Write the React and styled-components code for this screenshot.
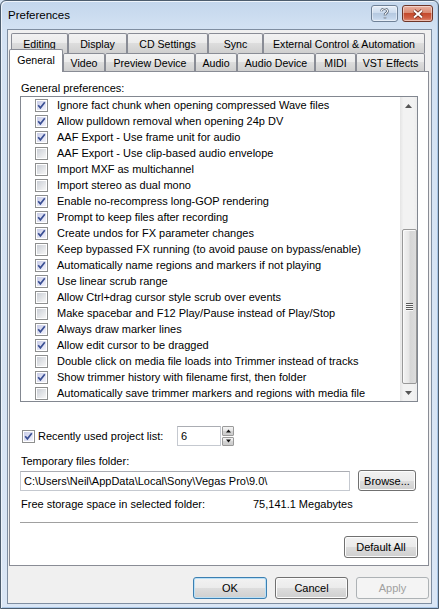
import React from "react";
import styled, { createGlobalStyle, css } from "styled-components";

const GlobalStyle = createGlobalStyle`
  html, body {
    margin: 0;
    padding: 0;
    background: #d6e4f4;
  }
  body {
    font-family: "Liberation Sans", Arial, sans-serif;
    font-size: 11px;
    color: #000;
  }
`;

const Window = styled.div`
  width: 439px;
  height: 609px;
  box-sizing: border-box;
  border: 1px solid #4d5d6e;
  border-radius: 6px 6px 0 0;
  background: linear-gradient(#c3d6ec 0, #d3e2f3 28px, #dae6f5 100%);
  box-shadow: inset 1px 1px 0 #eef4fb, inset -1px -1px 0 #a9c6e6;
  display: flex;
  flex-direction: column;
`;

const TitleBar = styled.div`
  height: 28px;
  display: flex;
  align-items: flex-start;
  justify-content: space-between;
  padding: 0 5px 0 7px;
`;

const Title = styled.div`
  font-size: 11.5px;
  line-height: 28px;
  color: #000;
`;

const CaptionButtons = styled.div`
  display: flex;
  gap: 4px;
  margin-top: 4px;
`;

const CaptionButton = styled.div`
  height: 17px;
  box-sizing: border-box;
  border-radius: 3px;
  display: flex;
  align-items: center;
  justify-content: center;
  ${(p) =>
    p.$close
      ? css`
          width: 31px;
          border: 1px solid #6e3528;
          background: linear-gradient(#eab1a1, #d98a72 45%, #c4492c 50%, #d06045 80%, #e19077);
        `
      : css`
          width: 27px;
          border: 1px solid #6f8197;
          background: linear-gradient(#e6eef8, #cddcee 45%, #b6c9e0 50%, #c2d4ea 80%, #d5e3f3);
        `}
  box-shadow: inset 0 0 0 1px rgba(255, 255, 255, 0.45);
`;

const Client = styled.div`
  flex: 1;
  margin: 0 6px 4px 6px;
  border: 1px solid #7f8ea1;
  background: #f0f0f0;
  display: flex;
  flex-direction: column;
  padding: 3px 2px 0 1px;
`;

const TabRow = styled.div`
  display: flex;
  height: ${(p) => p.$h}px;
  padding-left: ${(p) => p.$indent}px;
`;

const Tab = styled.div`
  width: ${(p) => p.$w}px;
  box-sizing: border-box;
  border: 1px solid #898c95;
  border-bottom: none;
  border-radius: 2px 2px 0 0;
  background: linear-gradient(#f2f2f2, #ebebeb 50%, #dddddd 50%, #cfcfcf);
  display: flex;
  align-items: center;
  justify-content: center;
  font-size: 10.6px;
  white-space: nowrap;
  height: 100%;
  ${(p) =>
    p.$active &&
    css`
      position: relative;
      z-index: 1;
      height: 23px;
      margin-top: -4px;
      background: #fff;
      padding-bottom: 2px;
    `}
`;

const Panel = styled.div`
  height: 495px;
  box-sizing: border-box;
  border: 1px solid #898c95;
  background: #fff;
  padding: 10px 10px 0 10px;
  display: flex;
  flex-direction: column;
`;

const Label = styled.div`
  height: ${(p) => p.$h || 13}px;
  line-height: 13px;
  margin-top: ${(p) => p.$mt || 0}px;
  padding-left: 1px;
  white-space: nowrap;
`;

const ListBox = styled.div`
  height: 306px;
  box-sizing: border-box;
  border: 1px solid #828790;
  display: flex;
`;

const ListItems = styled.div`
  flex: 1;
  display: flex;
  flex-direction: column;
  overflow: hidden;
`;

const ListRow = styled.div`
  height: 16px;
  display: flex;
  align-items: center;
  padding-left: 14px;
  white-space: nowrap;
  gap: 9px;
`;

const ScrollBar = styled.div`
  width: 17px;
  display: flex;
  flex-direction: column;
  background: linear-gradient(to right, #e4e4e4, #f2f2f2 20%, #f2f2f2 80%, #ececec);
`;

const ScrollArrow = styled.div`
  height: 17px;
  display: flex;
  align-items: center;
  justify-content: center;
`;

const ScrollTrack = styled.div`
  flex: 1;
  display: flex;
  flex-direction: column;
  justify-content: flex-end;
  padding-left: 2px;
`;

const ScrollThumb = styled.div`
  height: 155px;
  box-sizing: border-box;
  border: 1px solid #989898;
  border-radius: 2px;
  background: linear-gradient(to right, #f3f3f3, #e6e6e6 45%, #d6d6d6 55%, #dcdcdc);
  box-shadow: inset 1px 1px 0 #fafafa;
  display: flex;
  align-items: center;
  justify-content: center;
`;

const Grip = styled.div`
  width: 7px;
  display: flex;
  flex-direction: column;
  gap: 1px;
  & > span {
    height: 1px;
    background: #5a5a5a;
    box-shadow: 0 1px 0 #f8f8f8;
  }
`;

const FieldRow = styled.div`
  display: flex;
  align-items: center;
  height: ${(p) => p.$h}px;
  margin-top: ${(p) => p.$mt || 0}px;
  gap: ${(p) => p.$gap || 0}px;
`;

const CheckLabel = styled.div`
  display: flex;
  align-items: center;
  gap: 3px;
  width: 155px;
  padding-left: 2px;
`;

const Spinner = styled.div`
  display: flex;
  height: 20px;
  align-items: stretch;
`;

const TextBox = styled.div`
  width: ${(p) => p.$w}px;
  box-sizing: border-box;
  height: 20px;
  border: 1px solid #c5c9d0;
  border-top-color: #abadb3;
  background: #fff;
  padding-left: 3px;
  line-height: 18px;
  white-space: nowrap;
  overflow: hidden;
`;

const SpinButtons = styled.div`
  width: 12px;
  margin-left: 1px;
  display: flex;
  flex-direction: column;
  gap: 1px;
`;

const SpinButton = styled.div`
  flex: 1;
  box-sizing: border-box;
  border: 1px solid #9a9a9a;
  border-radius: 1px;
  background: linear-gradient(#f4f4f4, #e4e4e4 50%, #d5d5d5 50%, #cbcbcb);
  display: flex;
  align-items: center;
  justify-content: center;
`;

const Button = styled.div`
  width: ${(p) => p.$w}px;
  height: ${(p) => p.$h || 22}px;
  box-sizing: border-box;
  border: 1px solid #707070;
  border-radius: 3px;
  background: linear-gradient(#f2f2f2, #ebebeb 50%, #dddddd 50%, #cfcfcf);
  box-shadow: inset 0 0 0 1px #fcfcfc;
  display: flex;
  align-items: center;
  justify-content: center;
  white-space: nowrap;
  ${(p) =>
    p.$default &&
    css`
      border-color: #3c7fb1;
      box-shadow: inset 0 0 0 1px #b9e0f7;
    `}
  ${(p) =>
    p.$disabled &&
    css`
      border-color: #adb2b5;
      background: #f4f4f4;
      box-shadow: none;
      color: #a0a0a0;
    `}
`;

const Separator = styled.div`
  height: 1px;
  margin-top: 11px;
  background: #a0a0a0;
  border-bottom: 1px solid #fff;
`;

const RightAligned = styled.div`
  display: flex;
  justify-content: flex-end;
  gap: 8px;
  margin-top: ${(p) => p.$mt}px;
`;

const FreeSpace = styled.div`
  display: flex;
  margin-top: 7px;
  height: 13px;
  line-height: 13px;
  padding-left: 1px;
  & > span:first-child {
    width: 232px;
  }
`;

const BoxWrap = styled.span`
  width: 13px;
  height: 13px;
  flex: none;
  display: inline-flex;
`;

const CheckBox = ({ checked }) => (
  <BoxWrap>
    <svg width="13" height="13" viewBox="0 0 13 13">
      <defs>
        <linearGradient id="cbg" x1="0" y1="0" x2="1" y2="1">
          <stop offset="0" stopColor="#cbcfd6" />
          <stop offset="1" stopColor="#f6f6f6" />
        </linearGradient>
        <linearGradient id="cbc" x1="0" y1="0" x2="1" y2="1">
          <stop offset="0" stopColor="#c9cde8" />
          <stop offset="1" stopColor="#f2f2fb" />
        </linearGradient>
      </defs>
      <rect x="0.5" y="0.5" width="12" height="12" fill="#fff" stroke="#8e8f8f" />
      <rect x="2" y="2" width="9" height="9" fill={checked ? "url(#cbc)" : "url(#cbg)"} />
      {checked && (
        <path d="M3.2 6.2 L5.4 8.8 L9.8 3.2" fill="none" stroke="#3a4f94" strokeWidth="1.7" />
      )}
    </svg>
  </BoxWrap>
);

const Arrow = ({ up, color = "#555", w = 7 }) => (
  <svg width={w} height="4" viewBox="0 0 7 4">
    <path d={up ? "M0 4 L3.5 0 L7 4 Z" : "M0 0 L7 0 L3.5 4 Z"} fill={color} />
  </svg>
);

const rowOne = [
  ["Editing", 57],
  ["Display", 59],
  ["CD Settings", 81],
  ["Sync", 55],
  ["External Control & Automation", 162],
];

const rowTwo = [
  ["General", 54],
  ["Video", 42],
  ["Preview Device", 90],
  ["Audio", 42],
  ["Audio Device", 78],
  ["MIDI", 41],
  ["VST Effects", 69],
];

const prefs = [
  ["Ignore fact chunk when opening compressed Wave files", true],
  ["Allow pulldown removal when opening 24p DV", true],
  ["AAF Export - Use frame unit for audio", true],
  ["AAF Export - Use clip-based audio envelope", false],
  ["Import MXF as multichannel", false],
  ["Import stereo as dual mono", false],
  ["Enable no-recompress long-GOP rendering", true],
  ["Prompt to keep files after recording", true],
  ["Create undos for FX parameter changes", true],
  ["Keep bypassed FX running (to avoid pause on bypass/enable)", false],
  ["Automatically name regions and markers if not playing", true],
  ["Use linear scrub range", true],
  ["Allow Ctrl+drag cursor style scrub over events", false],
  ["Make spacebar and F12 Play/Pause instead of Play/Stop", false],
  ["Always draw marker lines", true],
  ["Allow edit cursor to be dragged", true],
  ["Double click on media file loads into Trimmer instead of tracks", false],
  ["Show trimmer history with filename first, then folder", true],
  ["Automatically save trimmer markers and regions with media file", false],
];

export default function App() {
  return (
    <>
      <GlobalStyle />
      <Window>
        <TitleBar>
          <Title>Preferences</Title>
          <CaptionButtons>
            <CaptionButton>
              <svg width="9" height="11" viewBox="0 0 9 11">
                <path
                  d="M1.5 3.2 C1.5 1.2 3 0.8 4.5 0.8 C6.3 0.8 7.5 1.8 7.5 3.2 C7.5 4.8 5.2 5.2 5 6.8 L5 7.6 M5 9.2 L5 10.4"
                  fill="none"
                  stroke="#3d4c60"
                  strokeWidth="2.4"
                />
                <path
                  d="M1.5 3.2 C1.5 1.2 3 0.8 4.5 0.8 C6.3 0.8 7.5 1.8 7.5 3.2 C7.5 4.8 5.2 5.2 5 6.8 L5 7.6 M5 9.2 L5 10.4"
                  fill="none"
                  stroke="#fff"
                  strokeWidth="1.1"
                />
              </svg>
            </CaptionButton>
            <CaptionButton $close>
              <svg width="12" height="10" viewBox="0 0 12 10">
                <path d="M2 1.5 L10 8.5 M10 1.5 L2 8.5" stroke="#6b2416" strokeWidth="3.6" />
                <path d="M2 1.5 L10 8.5 M10 1.5 L2 8.5" stroke="#fff" strokeWidth="2" />
              </svg>
            </CaptionButton>
          </CaptionButtons>
        </TitleBar>

        <Client>
          <TabRow $h={20} $indent={2}>
            {rowOne.map(([name, w]) => (
              <Tab key={name} $w={w}>
                {name}
              </Tab>
            ))}
          </TabRow>
          <TabRow $h={18} $indent={0}>
            {rowTwo.map(([name, w], i) => (
              <Tab key={name} $w={w} $active={i === 0}>
                {name}
              </Tab>
            ))}
          </TabRow>

          <Panel>
            <Label $h={14}>General preferences:</Label>
            <ListBox>
              <ListItems>
                {prefs.map(([text, on]) => (
                  <ListRow key={text}>
                    <CheckBox checked={on} />
                    <span>{text}</span>
                  </ListRow>
                ))}
              </ListItems>
              <ScrollBar>
                <ScrollArrow>
                  <Arrow up />
                </ScrollArrow>
                <ScrollTrack>
                  <ScrollThumb>
                    <Grip>
                      <span />
                      <span />
                      <span />
                      <span />
                    </Grip>
                  </ScrollThumb>
                </ScrollTrack>
                <ScrollArrow>
                  <Arrow />
                </ScrollArrow>
              </ScrollBar>
            </ListBox>

            <FieldRow $h={20} $mt={24}>
              <CheckLabel>
                <CheckBox checked />
                <span>Recently used project list:</span>
              </CheckLabel>
              <Spinner>
                <TextBox $w={44}>6</TextBox>
                <SpinButtons>
                  <SpinButton>
                    <Arrow up color="#111" w={5} />
                  </SpinButton>
                  <SpinButton>
                    <Arrow color="#111" w={5} />
                  </SpinButton>
                </SpinButtons>
              </Spinner>
            </FieldRow>

            <Label $mt={9}>Temporary files folder:</Label>
            <FieldRow $h={21} $mt={2} $gap={8}>
              <TextBox $w={330}>C:\Users\Neil\AppData\Local\Sony\Vegas Pro\9.0\</TextBox>
              <Button $w={58} $h={21}>
                Browse...
              </Button>
            </FieldRow>

            <FreeSpace>
              <span>Free storage space in selected folder:</span>
              <span>75,141.1 Megabytes</span>
            </FreeSpace>

            <Separator />

            <RightAligned $mt={12}>
              <Button $w={74}>Default All</Button>
            </RightAligned>
          </Panel>

          <RightAligned $mt={11}>
            <Button $w={74} $default>
              OK
            </Button>
            <Button $w={73}>Cancel</Button>
            <Button $w={73} $disabled>
              Apply
            </Button>
          </RightAligned>
        </Client>
      </Window>
    </>
  );
}
